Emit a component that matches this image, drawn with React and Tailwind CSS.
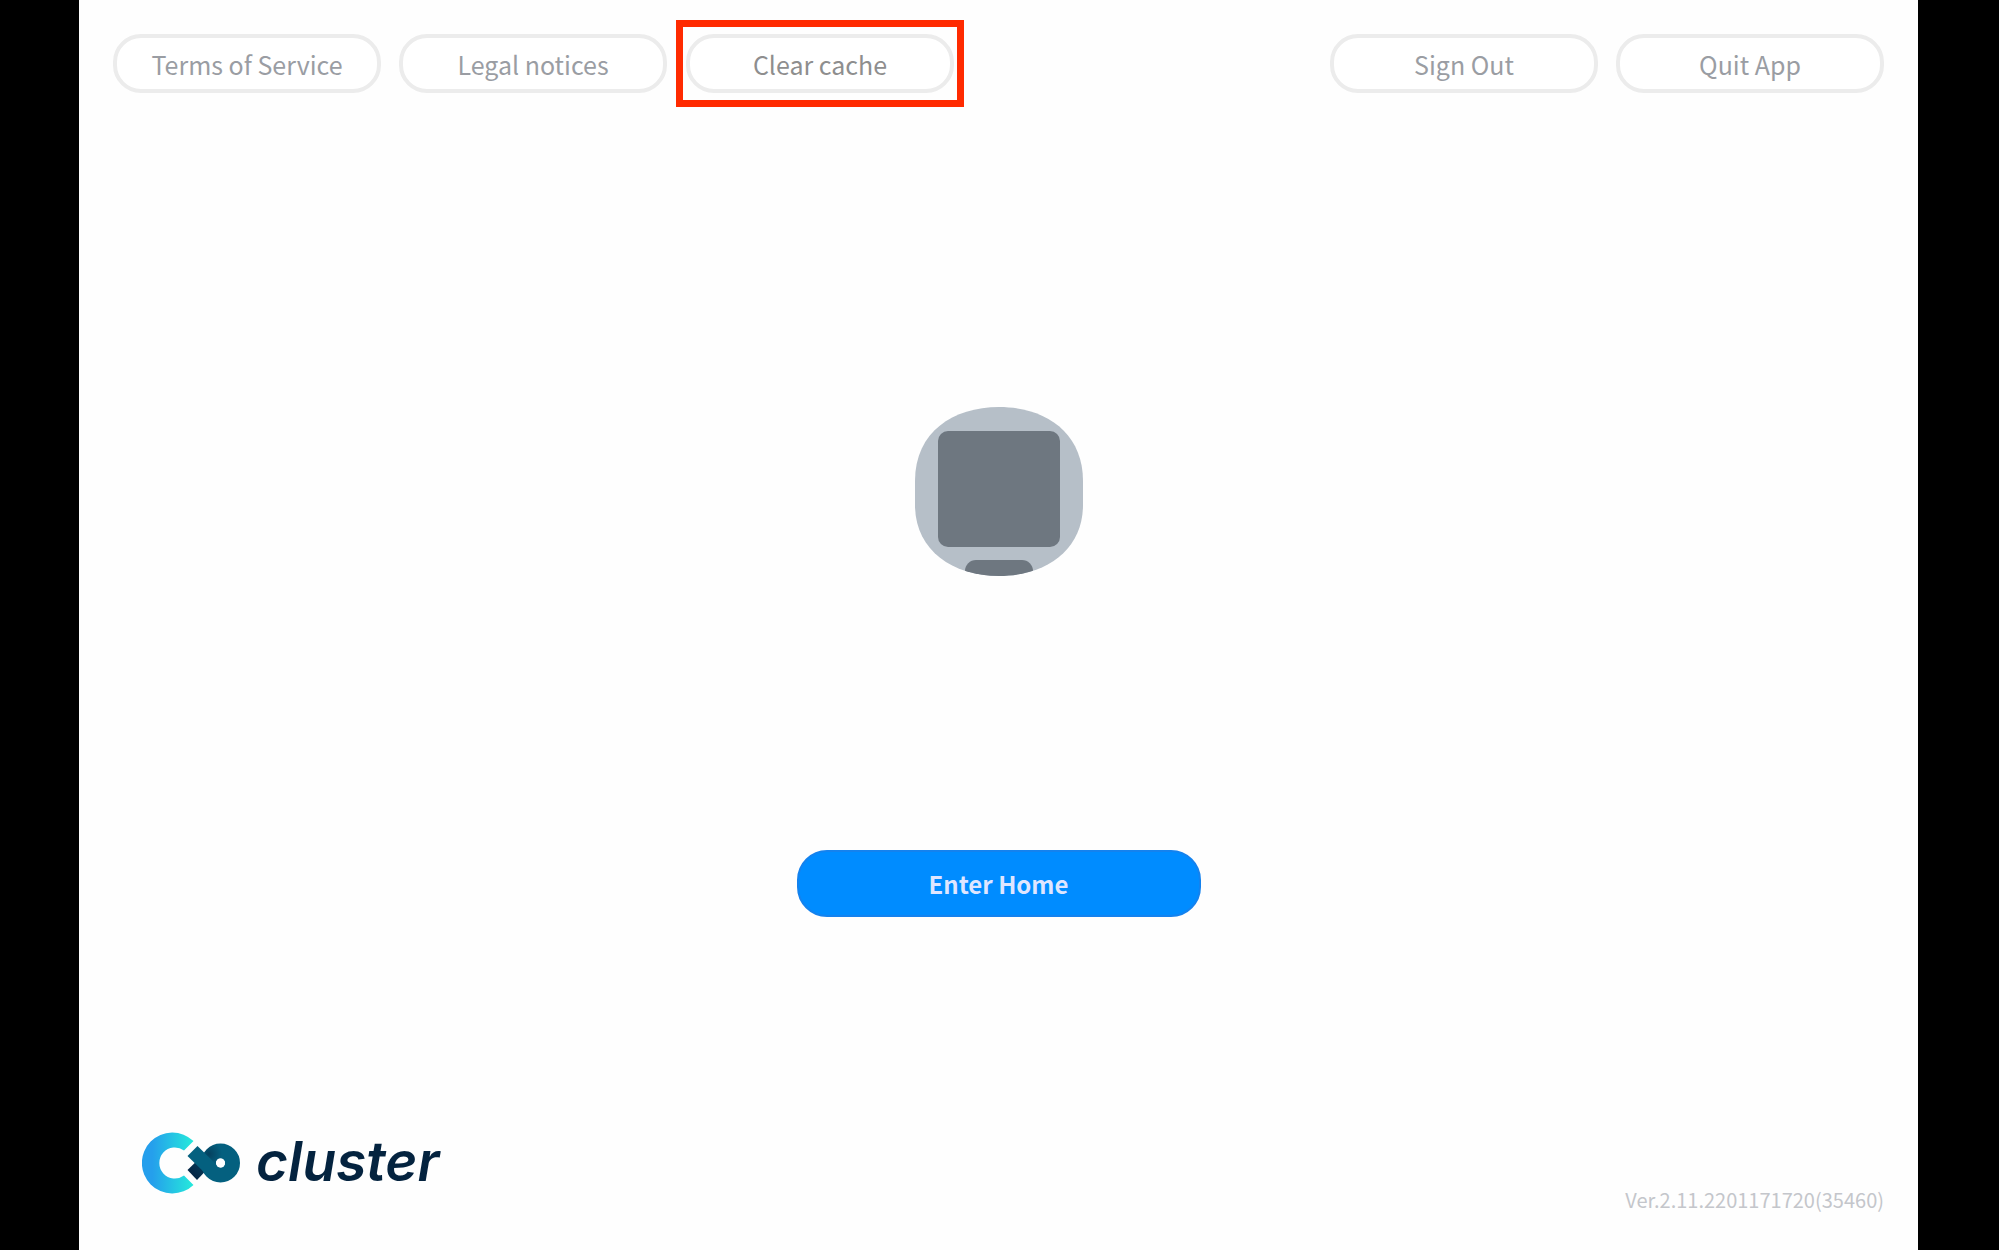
const leftActions = ["Terms of Service", "Legal notices"];
const rightActions = ["Sign Out", "Quit App"];

const OutlineButton = ({ children, dark }) => (
  <button
    type="button"
    className={`h-[59px] w-[268px] rounded-[28px] border-4 border-[#ececec] bg-white pt-px text-[25px] leading-8 ${
      dark ? "text-[#8e8e8e]" : "text-[#9a9da3]"
    }`}
  >
    {children}
  </button>
);

const Avatar = () => (
  <svg viewBox="0 0 168 169" className="h-[169px] w-[168px]" role="img" aria-label="Avatar">
    <defs>
      <clipPath id="avatar-shape">
        <path d="M84 0C130 0 168 25 168 74V98C168 142 132 169 84 169C36 169 0 142 0 98V74C0 25 38 0 84 0Z" />
      </clipPath>
    </defs>
    <g clipPath="url(#avatar-shape)">
      <rect width="168" height="169" fill="#b6bfc8" />
      <rect x="23" y="24" width="122" height="116" rx="10" fill="#6e7780" />
      <rect x="50" y="153" width="68" height="40" rx="11" fill="#6e7780" />
    </g>
  </svg>
);

const LogoMark = () => (
  <svg viewBox="0 0 98 62" className="h-[62px] w-[98px]" aria-hidden="true">
    <defs>
      <linearGradient id="logo-c" x1="0" y1="0" x2="1" y2="0">
        <stop offset="0.2" stopColor="#259fec" />
        <stop offset="1" stopColor="#25eadb" />
      </linearGradient>
      <radialGradient id="logo-loop" gradientUnits="userSpaceOnUse" cx="67" cy="22" r="13">
        <stop offset="0" stopColor="#04405e" />
        <stop offset="1" stopColor="#04607f" />
      </radialGradient>
      <linearGradient id="logo-tail" x1="0" y1="1" x2="1" y2="0">
        <stop offset="0.2" stopColor="#052746" />
        <stop offset="1" stopColor="#04506f" />
      </linearGradient>
    </defs>
    <path
      d="M51.500 9A30.500 30.500 0 1 0 51.500 53L42 43.500A15.500 15.500 0 1 1 42 18.500Z"
      fill="url(#logo-c)"
    />
    <path d="M45.500 38L64 20L73 29L55 48Z" fill="url(#logo-tail)" />
    <circle cx="78.500" cy="31" r="12" fill="none" stroke="url(#logo-loop)" strokeWidth="15" />
    <path d="M55.500 14L79 37L70 48L45.500 24Z" fill="#04607f" />
    <circle cx="78.500" cy="31" r="4.500" fill="#fff" />
  </svg>
);

const App = () => {
  return (
    <div className="min-h-screen bg-black pr-[81px] pl-[79px] font-['Noto_Sans_CJK_JP','Open_Sans',sans-serif]">
      <div className="flex min-h-screen flex-col bg-[#fefefe] px-[34px]">
        <header className="flex items-center justify-between pt-5">
          <div className="flex items-center gap-[9px]">
            <div className="flex gap-[18px]">
              {leftActions.map((label) => (
                <OutlineButton key={label}>{label}</OutlineButton>
              ))}
            </div>
            <div className="border-[7px] border-[#ff2a00] px-[3px] py-[7px]">
              <OutlineButton dark>Clear cache</OutlineButton>
            </div>
          </div>
          <div className="flex gap-[18px]">
            {rightActions.map((label) => (
              <OutlineButton key={label}>{label}</OutlineButton>
            ))}
          </div>
        </header>

        <main className="flex flex-1 flex-col items-center pt-[300px]">
          <Avatar />
          <button
            type="button"
            className="mt-[274px] h-[67px] w-[404px] rounded-[30px] border-2 border-[#1482ee] bg-[#008cff] pt-px text-[24px] leading-8 font-bold text-[#dfe6ff]"
          >
            Enter Home
          </button>
        </main>

        <footer className="flex items-end justify-between pb-9">
          <div className="mb-5 ml-[29px] flex items-center gap-4">
            <LogoMark />
            <span className="pb-1 font-['Inter',sans-serif] text-[55px] leading-[58px] font-semibold text-[#04233f] italic">
              cluster
            </span>
          </div>
          <p className="text-[20px] leading-7 text-[#c4c6cb]">Ver.2.11.2201171720(35460)</p>
        </footer>
      </div>
    </div>
  );
};

export default App;
